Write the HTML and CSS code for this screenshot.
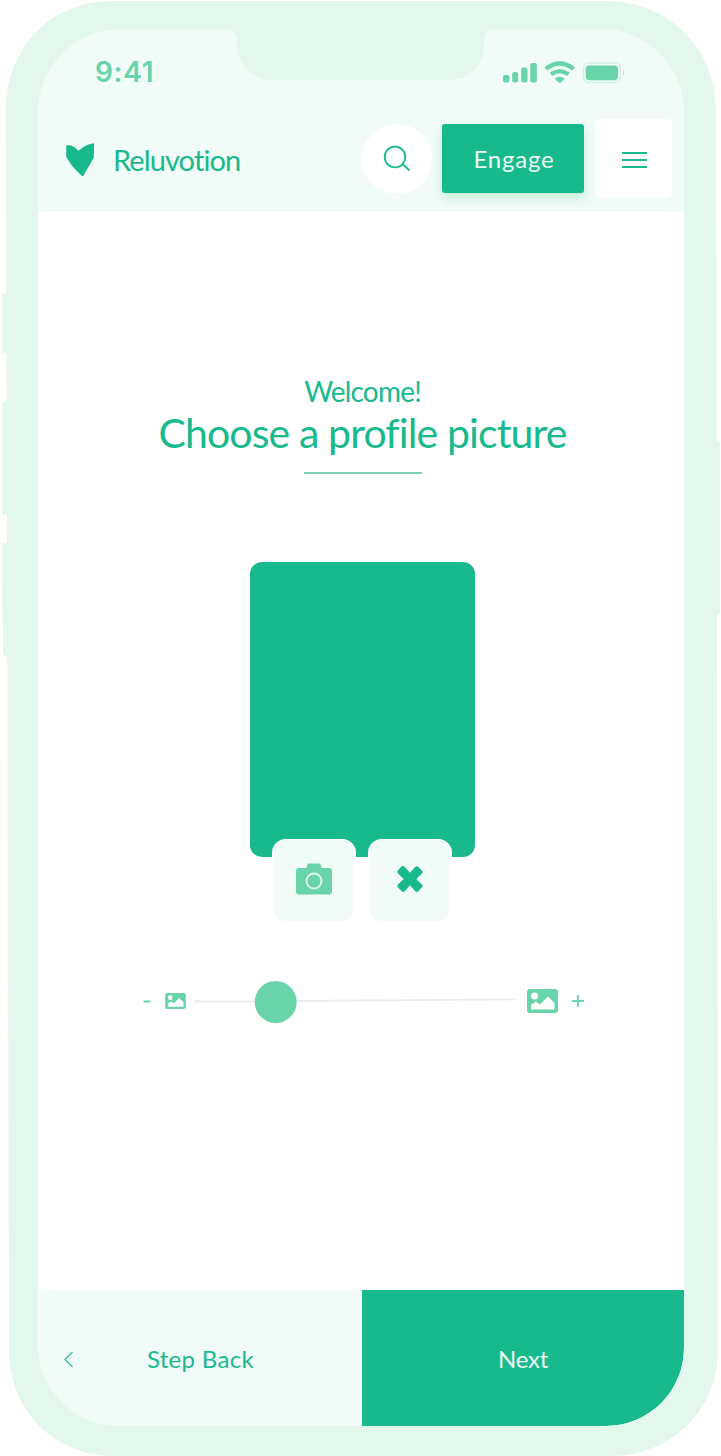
FILE: index.html
```html
<!DOCTYPE html>
<html lang="en">
<head>
<meta charset="utf-8">
<title>Reluvotion</title>
<link rel="stylesheet" href="styles.css">
</head>
<body>
<div class="phone">
  <svg class="frame" viewBox="0 0 721 1456" aria-hidden="true">
    <path d="M112 1H606C668 1 716 48 716 110L718 1350C718 1410 671 1456 611 1456H114C56 1456 9 1412 9 1350L6 110C6 48 50 1 112 1Z"/>
    <path d="M8 293H5Q2 293 2 297V349Q2 353 5 353H8ZM8 401H5Q2 401 2 405V511Q2 515 5 515H8ZM8 543H5Q2 543 2 547L3 652Q3 656 6 656H9ZM714 441H717Q720 441 720 445V611Q720 615 717 615H714Z"/>
  </svg>
  <div class="screen">
    <header class="top">
      <div class="status">
        <span class="time">9:41</span>
        <svg class="signals" width="124" height="24" viewBox="0 0 124 24" aria-hidden="true">
          <g fill="#69d3aa">
            <rect x="1" y="15" width="6.5" height="7.5" rx="2.5"/><rect x="10.2" y="12" width="6" height="10.500" rx="2.200"/><rect x="19.200" y="7.500" width="6.300" height="15" rx="2"/><rect x="28.300" y="3" width="6.500" height="19.500" rx="2"/>
            <path transform="translate(4 0)" d="M53.500 16.600 57.900 17.900Q59 18.500 58.300 19.300L54.700 22.400Q53.700 23.300 52.700 22.400L49.200 19.300Q48.500 18.500 49.600 17.900Z"/>
            <rect x="83.700" y="5.500" width="32.300" height="14.800" rx="3.800"/>
          </g>
          <path transform="translate(4 0)" d="M39.800 8.800Q53.700-1.800 67.600 8.800M45 14.300Q53.700 8 62.400 14.300" fill="none" stroke="#69d3aa" stroke-width="4.200"/>
          <rect x="81.500" y="3" width="37" height="19.500" rx="5.500" fill="none" stroke="#d3f2e4" stroke-width="1.500"/>
          <path d="M121 9.500Q123.500 12.800 121 16Z" fill="#b5e9d2"/>
        </svg>
      </div>
      <nav class="nav">
        <a class="brand">
          <svg width="30" height="36" viewBox="0 0 30 36" aria-hidden="true"><path d="M1.200 3.600C5 2.500 8.500 3.500 13.500 8.700 18 5 22 2 29 1.200L28.800 15.500C25.500 22 21.500 27.500 18.500 33.800Q17.500 34.600 16.500 33.500C11 28 6 24 1.200 14.500Z" fill="#18ba8d"/></svg>
          <span class="brand-name">Reluvotion</span>
        </a>
        <button class="search" aria-label="Search"><svg width="30" height="30" viewBox="0 0 30 30" fill="none" stroke="#18ba8d" stroke-width="1.800"><circle cx="13" cy="13" r="10.300"/><path d="M20.500 20 27.500 26.500"/></svg></button>
        <button class="engage">Engage</button>
        <button class="menu" aria-label="Menu"><span></span><span></span><span></span></button>
      </nav>
      <svg class="notch" width="272" height="52" viewBox="0 0 272 52" aria-hidden="true"><path d="M0 0H272V1H270Q260 1 260 14C260 38 246 52 224 52H49C27 52 13 36 13 14Q13 1 2 1H0Z"/></svg>
    </header>
    <main class="content">
      <p class="welcome">Welcome!</p>
      <h1 class="title">Choose a profile picture</h1>
      <div class="rule"></div>
      <div class="picture"></div>
      <div class="actions">
        <button class="action" aria-label="Take a photo"><svg width="36" height="32" viewBox="0 0 36 32"><path d="M3 5H9Q11 5 11 3.500 11 .5 13 .5H23Q25 .5 25 3.500 25 5 27 5H33Q36 5 36 8V28.500Q36 31.500 33 31.500H3Q0 31.500 0 28.500V8Q0 5 3 5Z" fill="#69d3aa"/><circle cx="18" cy="18" r="7.500" fill="none" stroke="#e3f7ec" stroke-width="1.900"/></svg></button>
        <button class="action" aria-label="Remove picture"><svg width="28" height="28" viewBox="0 0 28 28"><path d="M6.500 1Q8 1 9 2.200L14 7.700 19 2.200Q20.500 .3 22.200 1.800L26 5.700Q27.500 7 26 8.600L20.300 14 26 19.400Q27.500 21 26 22.400L22.200 26.300Q20.500 27.700 19 26L14 20.300 9 26Q7.500 27.700 5.800 26.300L2 22.400Q.5 21 2 19.400L7.700 14 2 8.600Q.5 7 2 5.600L5.200 1.800Q5.800 1 6.500 1Z" fill="#18ba8d"/></svg></button>
      </div>
      <div class="zoom">
        <svg class="minus" width="8" height="12" viewBox="0 0 8 12"><path d="M.5 6.500H7.500" stroke="#69d3aa" stroke-width="2"/></svg>
        <svg class="small-image" width="21" height="16" viewBox="0 0 31 24"><use href="#image"/></svg>
        <div class="slider">
          <svg width="322" height="42" viewBox="0 0 322 42"><path d="M0 20.500H60M102 20 322 18.300" stroke="#ececec" stroke-width="1.800"/><circle cx="80.700" cy="21" r="21" fill="#69d3aa"/></svg>
        </div>
        <svg class="large-image" width="31" height="24" viewBox="0 0 31 24"><g id="image"><rect width="31" height="24" rx="3" fill="#69d3aa"/><circle cx="7.500" cy="7" r="3.500" fill="#fff"/><path d="M4 20.500V16L9 12.500 13 15.500 21 7.500 27.500 14V20.500Z" fill="#fff"/></g></svg>
        <svg class="plus" width="12" height="12" viewBox="0 0 12 12"><path d="M0 6H12M6 0V12" stroke="#69d3aa" stroke-width="1.800"/></svg>
      </div>
    </main>
    <footer class="footer">
      <button class="back"><svg width="11" height="17" viewBox="0 0 11 17" fill="none" stroke="#35c097" stroke-width="1.300"><path d="M9.500 1 2 8.500 9.500 16"/></svg><span class="back-label">Step Back</span></button>
      <button class="next"><span>Next</span></button>
    </footer>
  </div>
</div>
</body>
</html>
```
FILE: styles.css
```css
* { box-sizing: border-box; }
body { margin: 0; background: #fff; font-family: Lato, sans-serif; color: #18ba8d; }
button { border: 0; padding: 0; font: inherit; color: inherit; }
svg { display: block; flex: none; }
.phone { position: relative; width: 721px; height: 1456px; padding: 29px 37px 30px 38px; overflow: hidden; }
.frame { position: absolute; inset: 0; width: 721px; height: 1456px; fill: #e3f7ec; }
.screen { position: relative; height: 1397px; display: flex; flex-direction: column; background: #fff; border-radius: 84px 84px 78px 82px; overflow: hidden; }
.top { position: relative; height: 183px; background: #f1fbf8; border-left: 1px solid #f8fdfb; }
.notch { position: absolute; left: 185px; top: -1px; fill: #e3f7ec; }
.status { height: 76px; padding: 10px 58px 0 56px; display: flex; align-items: center; justify-content: space-between; }
.time { font: 600 28px/32px Inter, sans-serif; color: #69d3aa; letter-spacing: .7px; }
.nav { height: 107px; display: flex; align-items: center; padding: 0 12px 0 26px; }
.brand { display: flex; align-items: center; gap: 18px; flex: 1; padding-top: 2px; }
.brand-name { font-size: 29px; line-height: 36px; letter-spacing: -.9px; }
.search { width: 70px; height: 70px; border-radius: 50%; background: #fff; display: grid; place-items: center; margin-right: 10px; }
.engage { width: 142px; height: 69px; border-radius: 3px; background: #18ba8d; color: #e9faf3; font-size: 24px; letter-spacing: .8px; padding-left: 2px; box-shadow: 0 5px 10px rgba(105, 211, 150, .35); margin-right: 11px; }
.menu { width: 77px; height: 79px; border-radius: 5px; background: #fff; display: flex; flex-direction: column; align-items: center; justify-content: center; gap: 5px; padding: 2px 0 0 1px; }
.menu span { width: 25px; height: 2px; background: #18ba8d; }
.content { flex: 1; display: flex; flex-direction: column; align-items: center; padding-top: 159px; padding-left: 3px; }
.welcome { margin: 0; font-size: 28px; line-height: 40px; letter-spacing: -.8px; }
.title { margin: 0; font-size: 41px; font-weight: 400; line-height: 44px; letter-spacing: -.88px; white-space: nowrap; }
.rule { width: 118px; height: 2px; background: #7fd0b0; margin: 17px 0 88px; }
.picture { width: 225px; height: 295px; border-radius: 12px; background: #18ba8d; flex: none; }
.actions { display: flex; gap: 12px; margin: -18px 2px 0 0; position: relative; }
.action { width: 84px; height: 84px; border: 2px solid #fff; border-top-width: 1px; border-radius: 14px; background: #f1fbf8; display: grid; place-items: center; padding-bottom: 3px; }
.zoom { width: 441px; height: 42px; margin: 58px 0 0 2px; display: flex; align-items: center; }
.minus, .small-image, .large-image, .plus { margin-bottom: 3px; }
.small-image { margin-left: 14px; }
.slider { margin-left: 9px; margin-right: 10px; }
.plus { margin-left: 14px; }
.footer { height: 136px; display: flex; margin-left: 1px; }
.back { width: 323px; background: #f1fbf8; display: flex; align-items: center; padding: 2px 0 0 24px; gap: 73px; font-size: 24px; }
.back-label { letter-spacing: .3px; padding-bottom: 2px; }
.next { flex: 1; background: #18ba8d; color: #e9faf3; font-size: 24px; letter-spacing: -.2px; padding-top: 1px; border-radius: 0 0 78px 0; }
```
